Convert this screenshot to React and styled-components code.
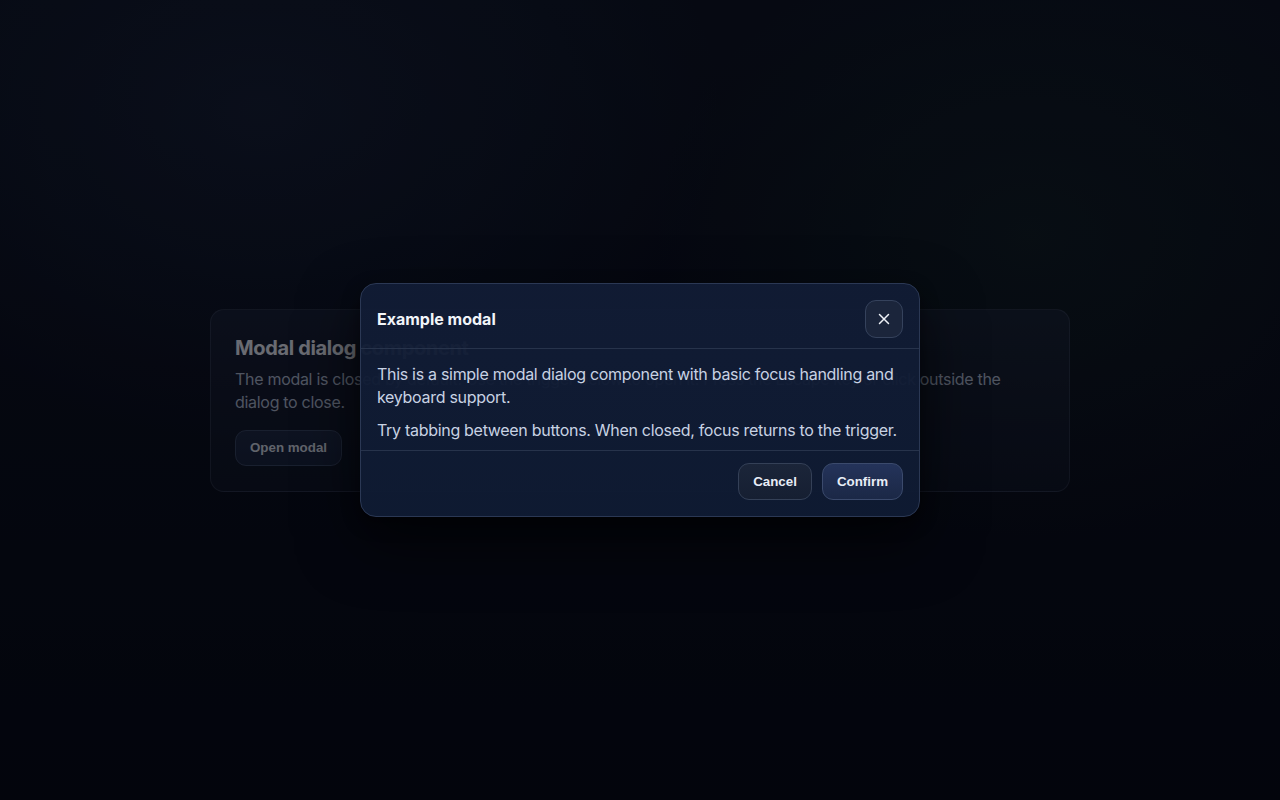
import React from "react";
import styled, { createGlobalStyle } from "styled-components";

const Global = createGlobalStyle`
  html, body { margin: 0; padding: 0; height: 100%; }
  body {
    font-family: Inter, "Noto Sans", "Liberation Sans", sans-serif;
    background: #04060c;
  }
  #root { height: 100%; }
`;

const Page = styled.div`
  position: relative;
  width: 100%;
  height: 100vh;
  overflow: hidden;
  display: flex;
  align-items: center;
  justify-content: center;
  background:
    radial-gradient(ellipse 640px 460px at 260px 110px, rgba(40, 56, 86, 0.3), transparent 72%),
    radial-gradient(ellipse 520px 420px at 1030px 235px, rgba(30, 62, 42, 0.26), transparent 72%),
    linear-gradient(180deg, #0a0f18 0%, #070a12 45%, #03050b 100%);
`;

const Card = styled.section`
  width: 860px;
  box-sizing: border-box;
  padding: 24px 24px 25px;
  border-radius: 14px;
  border: 1px solid rgba(148, 163, 184, 0.16);
  background: linear-gradient(180deg, rgba(30, 38, 56, 0.55), rgba(18, 24, 36, 0.55));
`;

const CardTitle = styled.h2`
  margin: 0 0 6px;
  font-size: 20px;
  line-height: 28px;
  font-weight: 700;
  letter-spacing: -0.35px;
  color: #e5e7eb;
`;

const CardText = styled.p`
  margin: 0 0 16px;
  max-width: 800px;
  font-size: 16px;
  line-height: 23px;
  letter-spacing: -0.3px;
  color: #aab4c4;
`;

const Button = styled.button`
  font-family: "Liberation Sans", Arial, sans-serif;
  font-size: 13.33px;
  font-weight: 700;
  height: ${(p) => (p.$tall ? 37 : 36)}px;
  padding: 0 14px;
  border-radius: 11px;
  cursor: pointer;
  color: ${(p) => (p.$muted ? "#d1d5db" : "#e8edf6")};
  border: 1px solid ${(p) => (p.$primary ? "#3b4a6c" : "#344057")};
  background: ${(p) =>
    p.$primary
      ? "linear-gradient(180deg, #24335a 0%, #1b2846 100%)"
      : "linear-gradient(180deg, #1b2539 0%, #161f32 100%)"};
`;

const Overlay = styled.div`
  position: absolute;
  inset: 0;
  background: rgba(3, 6, 14, 0.55);
  display: flex;
  align-items: center;
  justify-content: center;
`;

const Modal = styled.div`
  width: 560px;
  box-sizing: border-box;
  border-radius: 16px;
  border: 1px solid #2b3854;
  background: linear-gradient(180deg, rgba(17, 28, 53, 0.95) 0%, rgba(15, 27, 51, 0.95) 100%);
  box-shadow: 0 24px 60px rgba(0, 0, 0, 0.6), 0 6px 18px rgba(0, 0, 0, 0.35);
  overflow: hidden;
`;

const Header = styled.header`
  display: flex;
  align-items: center;
  justify-content: space-between;
  padding: 16px 16px 10px;
  border-bottom: 1px solid #27334b;
`;

const ModalTitle = styled.h3`
  margin: 0;
  font-size: 16px;
  font-weight: 700;
  color: #f1f5f9;
`;

const CloseButton = styled.button`
  width: 38px;
  height: 38px;
  border-radius: 11px;
  border: 1px solid #35425c;
  background: #1b253b;
  display: flex;
  align-items: center;
  justify-content: center;
  padding: 0;
  cursor: pointer;
`;

const Body = styled.div`
  padding: 14px 16px 8px;
  display: flex;
  flex-direction: column;
  gap: 10px;
`;

const BodyText = styled.p`
  margin: 0;
  font-size: 16px;
  line-height: 23px;
  letter-spacing: -0.3px;
  color: #c8d2e3;
`;

const Footer = styled.footer`
  display: flex;
  justify-content: flex-end;
  gap: 10px;
  padding: 12px 16px 16px;
  border-top: 1px solid #27334b;
`;

export default function App() {
  return (
    <>
      <Global />
      <Page>
        <Card>
          <CardTitle>Modal dialog component</CardTitle>
          <CardText>
            The modal is closed by default. Use the trigger below to open it. Press the Escape key
            or click outside the dialog to close.
          </CardText>
          <Button $muted>Open modal</Button>
        </Card>
        <Overlay>
          <Modal role="dialog" aria-modal="true" aria-labelledby="modal-title">
            <Header>
              <ModalTitle id="modal-title">Example modal</ModalTitle>
              <CloseButton aria-label="Close">
                <svg width="14" height="14" viewBox="0 0 14 14" fill="none">
                  <path d="M2.5 2.5l9 9M11.5 2.5l-9 9" stroke="#eef2f8" strokeWidth="1.5" strokeLinecap="round" />
                </svg>
              </CloseButton>
            </Header>
            <Body>
              <BodyText>
                This is a simple modal dialog component with basic focus handling and keyboard
                support.
              </BodyText>
              <BodyText>Try tabbing between buttons. When closed, focus returns to the trigger.</BodyText>
            </Body>
            <Footer>
              <Button $tall>Cancel</Button>
              <Button $tall $primary>Confirm</Button>
            </Footer>
          </Modal>
        </Overlay>
      </Page>
    </>
  );
}
